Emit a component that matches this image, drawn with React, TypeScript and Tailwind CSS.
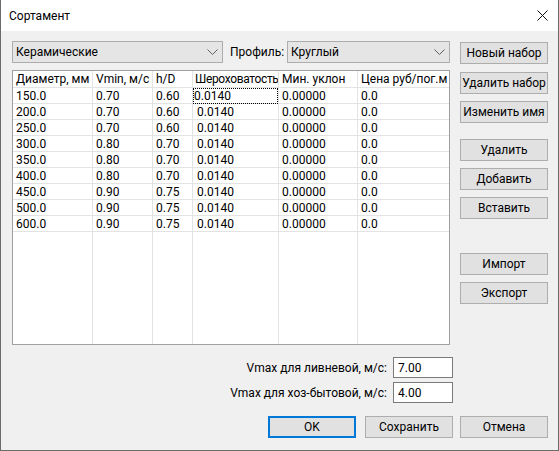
import React from "react";

const rows = [
  ["150.0", "0.70", "0.60", "0.0140", "0.00000", "0.0"],
  ["200.0", "0.70", "0.60", "0.0140", "0.00000", "0.0"],
  ["250.0", "0.70", "0.60", "0.0140", "0.00000", "0.0"],
  ["300.0", "0.80", "0.70", "0.0140", "0.00000", "0.0"],
  ["350.0", "0.80", "0.70", "0.0140", "0.00000", "0.0"],
  ["400.0", "0.80", "0.70", "0.0140", "0.00000", "0.0"],
  ["450.0", "0.90", "0.75", "0.0140", "0.00000", "0.0"],
  ["500.0", "0.90", "0.75", "0.0140", "0.00000", "0.0"],
  ["600.0", "0.90", "0.75", "0.0140", "0.00000", "0.0"],
];

const headers = ["Диаметр, мм", "Vmin, м/с", "h/D", "Шероховатость", "Мин. уклон", "Цена руб/пог.м"];
const widths = ["w-[80px]", "w-[60px]", "w-[40px]", "w-[86px]", "w-[79px]", "w-[91px]"];

const Chevron = () => (
  <svg width="11" height="7" viewBox="0 0 11 7" className="shrink-0">
    <path d="M0.5 0.5 L5.5 5.5 L10.5 0.5" fill="none" stroke="#606060" strokeWidth="1" />
  </svg>
);

const Btn = ({ label, className = "" }: { label: string; className?: string }) => (
  <button
    className={`h-[22px] w-[88px] border border-[#adadad] bg-[#e1e1e1] text-[12px] text-black flex items-center justify-center ${className}`}
  >
    {label}
  </button>
);

export default function App() {
  return (
    <div
      className="w-[559px] h-[451px] flex flex-col bg-white border-x border-b border-[#6b6b6b] text-black text-[12px]"
      style={{ fontFamily: 'Roboto, "Noto Sans", sans-serif' }}
    >
      {/* title bar */}
      <div className="h-[31px] shrink-0 flex items-center justify-between pl-[8px] pr-[10px] bg-white">
        <span className="text-[12px]">Сортамент</span>
        <svg width="11" height="11" viewBox="0 0 11 11">
          <path d="M0.5 0.5 L10.5 10.5 M10.5 0.5 L0.5 10.5" stroke="#111" strokeWidth="1" />
        </svg>
      </div>

      <div className="flex-1 bg-[#f0f0f0] flex flex-col pl-[11px] pr-[10px]">
        <div className="flex">
          {/* left column */}
          <div className="flex flex-col w-[438px]">
            <div className="flex items-center mt-[10px] h-[22px]">
              <div className="w-[211px] h-[22px] border border-[#adadad] bg-[#e5e5e5] flex items-center justify-between pl-[3px] pr-[4px]">
                <span>Керамические</span>
                <Chevron />
              </div>
              <span className="ml-[7px] w-[57px]">Профиль:</span>
              <div className="w-[163px] h-[22px] border border-[#adadad] bg-[#e5e5e5] flex items-center justify-between pl-[3px] pr-[4px]">
                <span>Круглый</span>
                <Chevron />
              </div>
            </div>

            {/* table */}
            <div className="mt-[7px] h-[275px] w-[438px] border border-[#a0a0a0] bg-white flex overflow-hidden">
              {headers.map((h, c) => (
                <div
                  key={h}
                  className={`${widths[c]} shrink-0 flex flex-col ${c < 5 ? "border-r border-[#e3e3e3]" : ""}`}
                >
                  <div
                    className={`h-[17px] shrink-0 border-b border-[#e3e3e3] flex items-center whitespace-nowrap overflow-hidden ${
                      c === 3 ? "pl-[2px] tracking-[-0.35px]" : "pl-[3px]"
                    }`}
                  >
                    {h}
                  </div>
                  {rows.map((r, i) => (
                    <div
                      key={i}
                      className={`h-[16px] shrink-0 border-b border-[#e3e3e3] flex items-center whitespace-nowrap ${
                        c === 3 && i === 0 ? "pl-[1px] outline-1 outline-dotted outline-black -outline-offset-1" : c === 3 ? "pl-[4px]" : "pl-[3px]"
                      }`}
                    >
                      {r[c]}
                    </div>
                  ))}
                </div>
              ))}
            </div>
          </div>

          {/* right buttons */}
          <div className="flex flex-col ml-[10px] pt-[11px]">
            <Btn label="Новый набор" />
            <Btn label="Удалить набор" className="mt-[8px]" />
            <Btn label="Изменить имя" className="mt-[7px]" />
            <Btn label="Удалить" className="mt-[16px]" />
            <Btn label="Добавить" className="mt-[7px]" />
            <Btn label="Вставить" className="mt-[7px]" />
            <Btn label="Импорт" className="mt-[34px]" />
            <Btn label="Экспорт" className="mt-[7px]" />
          </div>
        </div>

        {/* vmax fields */}
        <div className="flex flex-col items-end pr-[95px] mt-[12px]">
          <div className="flex items-center">
            <span className="mr-[6px]">Vmax для ливневой, м/с:</span>
            <div className="w-[60px] h-[21px] border border-[#7a7a7a] bg-white flex items-center pl-[4px]">7.00</div>
          </div>
          <div className="flex items-center mt-[4px]">
            <span className="mr-[6px]">Vmax для хоз-бытовой, м/с:</span>
            <div className="w-[60px] h-[21px] border border-[#7a7a7a] bg-white flex items-center pl-[4px]">4.00</div>
          </div>
        </div>

        {/* dialog buttons */}
        <div className="flex justify-end mt-[13px]">
          <button className="h-[22px] w-[88px] border-2 border-[#0078d7] bg-[#e1e1e1] text-[12px] flex items-center justify-center">
            OK
          </button>
          <Btn label="Сохранить" className="w-[87px] ml-[9px]" />
          <Btn label="Отмена" className="ml-[7px]" />
        </div>
      </div>
    </div>
  );
}
